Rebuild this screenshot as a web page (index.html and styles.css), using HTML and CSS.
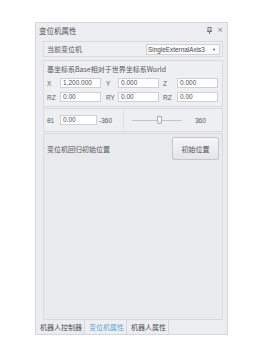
FILE: index.html
```html
<!DOCTYPE html>
<html>
<head>
<meta charset="utf-8">
<link rel="stylesheet" href="styles.css">
</head>
<body>
<div class="panel">
  <div class="titlebar">
    <span class="title">变位机属性</span>
    <span class="tools">
      <svg class="pin" width="5" height="7" viewBox="0 0 5 7"><rect x="1" y="0.5" width="3" height="3.5" fill="none" stroke="#7a7a7e" stroke-width="1"/><line x1="0" y1="4.5" x2="5" y2="4.5" stroke="#7a7a7e" stroke-width="1"/><line x1="2.5" y1="4.5" x2="2.5" y2="7" stroke="#7a7a7e" stroke-width="1"/></svg>
      <span class="close">×</span>
    </span>
  </div>
  <div class="body">
    <div class="group g1">
      <span class="lbl">当前变位机</span>
      <div class="combo"><span>SingleExternalAxis3</span><span class="arrow">▼</span></div>
    </div>
    <div class="group g2">
      <div class="heading">基坐标系Base相对于世界坐标系World</div>
      <div class="grid">
        <span class="gl">X</span><div class="input">1,200.000</div>
        <span class="gl gl2">Y</span><div class="input">0.000</div>
        <span class="gl gl3">Z</span><div class="input">0.000</div>
        <span class="gl">RZ</span><div class="input">0.00</div>
        <span class="gl gl2">RY</span><div class="input">0.00</div>
        <span class="gl gl3">RZ</span><div class="input">0.00</div>
      </div>
    </div>
    <div class="group g3">
      <span class="gl">θ1</span>
      <div class="input in-theta">0.00</div>
      <span class="min">-360</span>
      <span class="vsep"></span>
      <div class="slider"><span class="track"></span><span class="thumb"></span></div>
      <span class="max">360</span>
    </div>
    <div class="group g4">
      <div class="row4">
        <span class="lbl">变位机回归初始位置</span>
        <div class="btn">初始位置</div>
      </div>
    </div>
  </div>
  <div class="tabs">
    <span class="tab">机器人控制器</span>
    <span class="tab active">变位机属性</span>
    <span class="tab">机器人属性</span>
  </div>
</div>
</body>
</html>
```
FILE: styles.css
```css
* { box-sizing: border-box; }
html, body { margin: 0; padding: 0; background: #ffffff; }
body {
  font-family: "Noto Sans CJK SC", "Liberation Sans", sans-serif;
  font-size: 7px;
  color: #56565a;
  width: 263px;
  height: 345px;
  padding: 22px 0 0 35px;
}
.panel {
  width: 193px;
  height: 313px;
  border: 1px solid #d6d7db;
  background: #ecedf1;
  display: flex;
  flex-direction: column;
}
.titlebar {
  height: 14px;
  display: flex;
  align-items: center;
  justify-content: space-between;
  padding: 0 4px 0 3px;
  font-size: 7.5px;
  color: #4e4e52;
}
.tools { display: flex; gap: 5px; align-items: center; color: #777; }
.pin { display: block; }
.close { font-family: "DejaVu Sans", sans-serif; font-size: 7px; line-height: 7px; }
.body {
  flex: 1;
  display: flex;
  flex-direction: column;
  margin: 4px 4px 0 7px;
  min-height: 0;
}
.group {
  border: 1px solid #d9dade;
  background: #eeeff2;
}
.g1 {
  height: 16px;
  display: flex;
  align-items: center;
  justify-content: space-between;
  padding: 0 2px 0 3px;
}
.combo {
  width: 74px;
  height: 11px;
  background: #fbfbfc;
  border: 1px solid #d0d1d5;
  display: flex;
  align-items: center;
  justify-content: space-between;
  padding: 0 3px 0 1px;
  font-family: "Liberation Sans", sans-serif;
  font-size: 6.4px;
  color: #4a4a4e;
}
.arrow { font-size: 4px; color: #555; }
.g2 {
  margin-top: 3px;
  height: 47px;
  padding: 2px 3px 0 3px;
}
.heading { height: 13px; line-height: 12px; color: #55555a; }
.grid {
  display: grid;
  grid-template-columns: 13px 41px 17px 41px 18px 41px;
  grid-auto-rows: 10px;
  row-gap: 4px;
  margin-top: 2px;
  align-items: center;
}
.gl { font-family: "Liberation Sans", sans-serif; font-size: 6.5px; color: #606064; }
.gl2 { padding-left: 5px; }
.gl3 { padding-left: 4px; }
.input {
  height: 10px;
  background: #ffffff;
  border: 1px solid #cfd0d4;
  font-family: "Liberation Sans", sans-serif;
  font-size: 6.5px;
  line-height: 8px;
  padding-left: 2px;
  color: #505054;
}
.g3 {
  margin-top: 1px;
  height: 24px;
  display: flex;
  align-items: center;
  padding-left: 3px;
}
.g3 .gl { width: 13px; }
.in-theta { width: 37px; }
.min { font-family: "Liberation Sans", sans-serif; font-size: 6.5px; margin-left: 2px; width: 24px; }
.vsep { width: 1px; height: 18px; background: #dcdde0; }
.slider { position: relative; width: 50px; height: 10px; margin-left: 8px; }
.track { position: absolute; left: 0; right: 0; top: 5px; height: 1px; background: #c4c5c9; }
.thumb {
  position: absolute; left: 25px; top: 1px; width: 5px; height: 8px;
  background: #f7f7f8; border: 1px solid #a9aaae; border-radius: 1px 1px 3px 3px;
}
.max { font-family: "Liberation Sans", sans-serif; font-size: 6.5px; margin-left: 13px; }
.g4 {
  margin-top: 1px;
  flex: 1;
  background: #e9eaee;
  padding: 3px 3px 0 3px;
}
.row4 { display: flex; align-items: center; justify-content: space-between; }
.btn {
  width: 47px;
  height: 23px;
  border: 1px solid #c5c6ca;
  border-radius: 2px;
  background: linear-gradient(#f6f6f7, #e4e5e8);
  display: flex;
  align-items: center;
  justify-content: center;
  color: #505054;
}
.tabs {
  height: 14px;
  display: flex;
  align-items: stretch;
  background: #ecedf1;
}
.tab {
  display: flex;
  align-items: center;
  padding: 0 2px 0 4px;
  border-right: 1px solid #d4d5d9;
  color: #4e4e52;
}
.tab.active { color: #5aa6d6; background: #eeeff2; }
```
